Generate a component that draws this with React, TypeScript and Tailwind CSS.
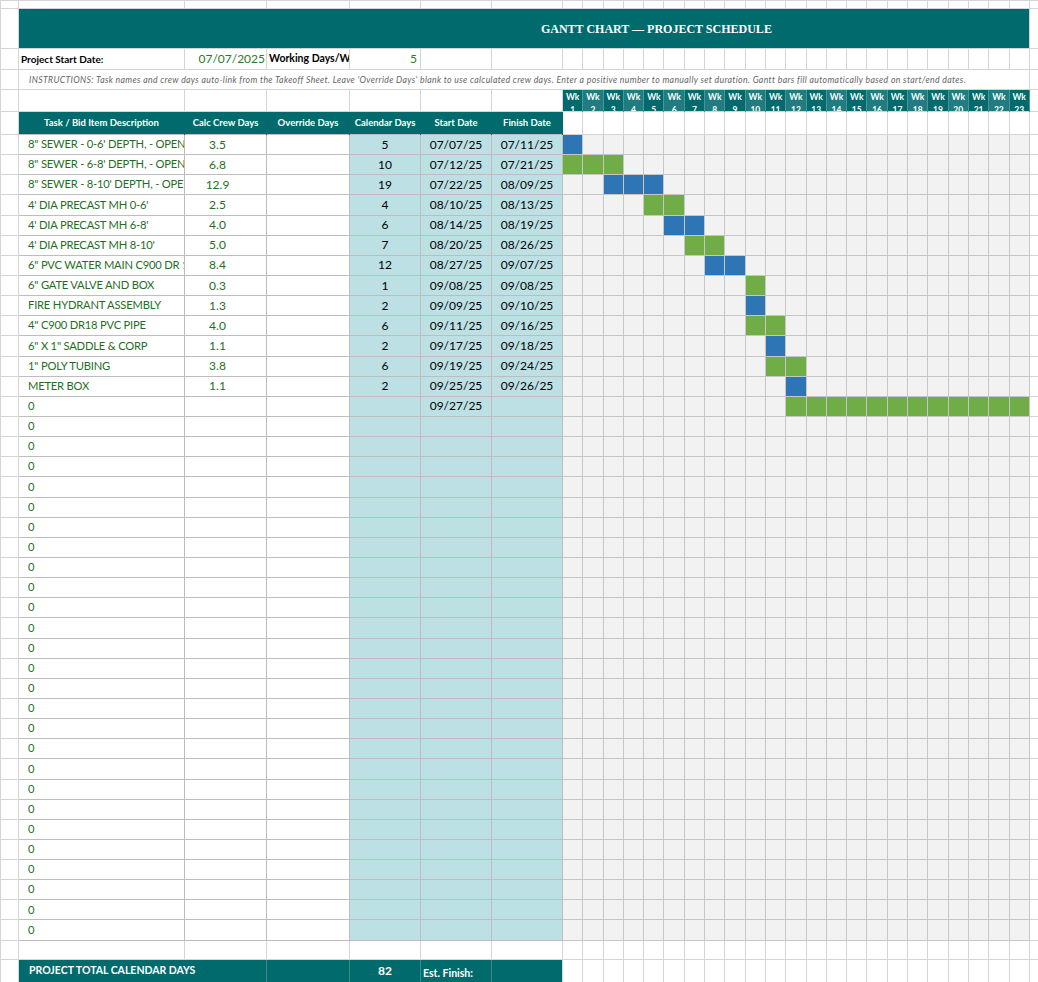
import React from "react";

const tasks: [string, string, string, string, string, number, number, string][] = [
  ['8" SEWER - 0-6\' DEPTH, - OPEN', "3.5", "5", "07/07/25", "07/11/25", 1, 1, "b"],
  ['8" SEWER - 6-8\' DEPTH, - OPEN', "6.8", "10", "07/12/25", "07/21/25", 1, 3, "g"],
  ['8" SEWER - 8-10\' DEPTH, - OPEN CUT', "12.9", "19", "07/22/25", "08/09/25", 3, 5, "b"],
  ["4' DIA PRECAST MH 0-6'", "2.5", "4", "08/10/25", "08/13/25", 5, 6, "g"],
  ["4' DIA PRECAST MH 6-8'", "4.0", "6", "08/14/25", "08/19/25", 6, 7, "b"],
  ["4' DIA PRECAST MH 8-10'", "5.0", "7", "08/20/25", "08/26/25", 7, 8, "g"],
  ['6" PVC WATER MAIN C900 DR 18', "8.4", "12", "08/27/25", "09/07/25", 8, 9, "b"],
  ['6" GATE VALVE AND BOX', "0.3", "1", "09/08/25", "09/08/25", 10, 10, "g"],
  ["FIRE HYDRANT ASSEMBLY", "1.3", "2", "09/09/25", "09/10/25", 10, 10, "b"],
  ['4" C900 DR18 PVC PIPE', "4.0", "6", "09/11/25", "09/16/25", 10, 11, "g"],
  ['6" X 1" SADDLE & CORP', "1.1", "2", "09/17/25", "09/18/25", 11, 11, "b"],
  ['1" POLY TUBING', "3.8", "6", "09/19/25", "09/24/25", 11, 12, "g"],
  ["METER BOX", "1.1", "2", "09/25/25", "09/26/25", 12, 12, "b"],
  ["0", "", "", "09/27/25", "", 12, 23, "g"],
];

const weeks = Array.from({ length: 23 }, (_, i) => i + 1);
const font = { fontFamily: "Lato, 'Open Sans', sans-serif" };

export default function App() {
  const rows = [...tasks];
  while (rows.length < 40) rows.push(["0", "", "", "", "", 0, -1, "g"]);
  const g = "border border-[#d4d4d4]";
  const d = "border border-[#bdbdbd]";
  return (
    <div className="w-[1038px] h-[982px] bg-white overflow-hidden text-[12px]" style={font}>
      <table className="table-fixed border-collapse w-[1038px]">
        <colgroup>
          <col className="w-[18px]" />
          <col className="w-[166px]" />
          <col className="w-[82px]" />
          <col className="w-[83px]" />
          <col className="w-[71px]" />
          <col className="w-[71px]" />
          <col className="w-[71px]" />
          {weeks.map((w) => (
            <col key={w} className="w-[20.3px]" />
          ))}
          <col className="w-[9px]" />
        </colgroup>
        <tbody>
          <tr className="h-[8px]">
            {Array.from({ length: 31 }, (_, i) => (
              <td key={i} className={g}></td>
            ))}
          </tr>
          <tr className="h-[40px]">
            <td className={g}></td>
            <td colSpan={29} className="bg-[#006a6c] text-white font-bold text-[12px] text-center pl-[265px]" style={{ fontFamily: "'Liberation Serif', serif" }}>
              GANTT CHART — PROJECT SCHEDULE
            </td>
            <td className={g}></td>
          </tr>
          <tr className="h-[21px]">
            <td className={g}></td>
            <td className={`${g} font-bold text-[10px] px-[2px]`}>Project Start Date:</td>
            <td className={`${g} text-right text-[#2a7a2a] px-[1px] text-[12px]`}>07/07/2025</td>
            <td className={`${g} p-0`}>
              <div className="font-bold text-[10.5px] whitespace-nowrap overflow-hidden px-[2px]">Working Days/Week</div>
            </td>
            <td className={`${g} text-right text-[#2a7a2a] px-[3px]`}>5</td>
            {Array.from({ length: 26 }, (_, i) => (
              <td key={i} className={g}></td>
            ))}
          </tr>
          <tr className="h-[20px]">
            <td className={g}></td>
            <td colSpan={29} className="border-y border-[#d4d4d4] p-0">
              <div className="whitespace-nowrap overflow-hidden italic text-[8.7px] tracking-[0.35px] text-[#666] pl-[10px]">
                INSTRUCTIONS: Task names and crew days auto-link from the Takeoff Sheet. Leave 'Override Days' blank to use calculated crew days. Enter a positive number to manually set duration. Gantt bars fill automatically based on start/end dates.
              </div>
            </td>
            <td className={g}></td>
          </tr>
          <tr className="h-[21px]">
            {Array.from({ length: 7 }, (_, i) => (
              <td key={i} className={g}></td>
            ))}
            {weeks.map((w) => (
              <td key={w} className={`${w % 2 === 0 ? "bg-[#1f7c80]" : "bg-[#006a6c]"} border-x border-[#4a9597] p-0 align-top`}>
                <div className="h-[21px] overflow-hidden text-white font-bold text-[8.5px] leading-[13px] pt-[1px] text-center">
                  Wk
                  <br />
                  {w}
                </div>
              </td>
            ))}
            <td className={g}></td>
          </tr>
          <tr className="h-[23px]">
            <td className={g}></td>
            {["Task / Bid Item Description", "Calc Crew Days", "Override Days", "Calendar Days", "Start Date", "Finish Date"].map((h) => (
              <td key={h} className="bg-[#006a6c] text-white font-bold text-[9.5px] text-center whitespace-nowrap border-x border-[#006a6c]">
                {h}
              </td>
            ))}
            {weeks.map((w) => (
              <td key={w} className={g}></td>
            ))}
            <td className={g}></td>
          </tr>
          {rows.map((r, i) => (
            <tr key={i} className="h-[20.15px]">
              <td className={g}></td>
              <td className={`${d} p-0`}>
                <div className="text-[#1f6e1f] text-[11.2px] tracking-[-0.2px] pl-[9px] whitespace-nowrap overflow-hidden">{r[0]}</div>
              </td>
              <td className={`${d} text-[#1f6e1f] text-center pr-[16px]`}>{r[1]}</td>
              <td className={d}></td>
              <td className={`${d} bg-[#bde0e5] text-center`}>{r[2]}</td>
              <td className={`${d} bg-[#bde0e5] text-center`}>{r[3]}</td>
              <td className={`${d} bg-[#bde0e5] text-center`}>{r[4]}</td>
              {weeks.map((w) => {
                const on = w >= r[5] && w <= r[6];
                const bg = on ? (r[7] === "b" ? "bg-[#2e75b6]" : "bg-[#70ad47]") : "bg-[#f2f2f2]";
                return <td key={w} className={`${bg} border border-[#c6c6c6]`}></td>;
              })}
              <td className={g}></td>
            </tr>
          ))}
          <tr className="h-[19px]">
            {Array.from({ length: 31 }, (_, i) => (
              <td key={i} className={g}></td>
            ))}
          </tr>
          <tr className="h-[23px]">
            <td className={g}></td>
            <td colSpan={2} className="bg-[#006a6c] text-white font-bold text-[10.5px] pl-[10px] border-r border-[#3a8a8c]">PROJECT TOTAL CALENDAR DAYS</td>
            <td className="bg-[#006a6c] border-r border-[#3a8a8c]"></td>
            <td className="bg-[#006a6c] text-white font-bold text-center text-[12px] border-r border-[#3a8a8c]">82</td>
            <td className="bg-[#006a6c] text-white font-bold text-[10.5px] align-bottom pl-[2px] border-r border-[#3a8a8c]">Est. Finish:</td>
            <td className="bg-[#006a6c]"></td>
            {Array.from({ length: 24 }, (_, i) => (
              <td key={i} className={g}></td>
            ))}
          </tr>
        </tbody>
      </table>
    </div>
  );
}
